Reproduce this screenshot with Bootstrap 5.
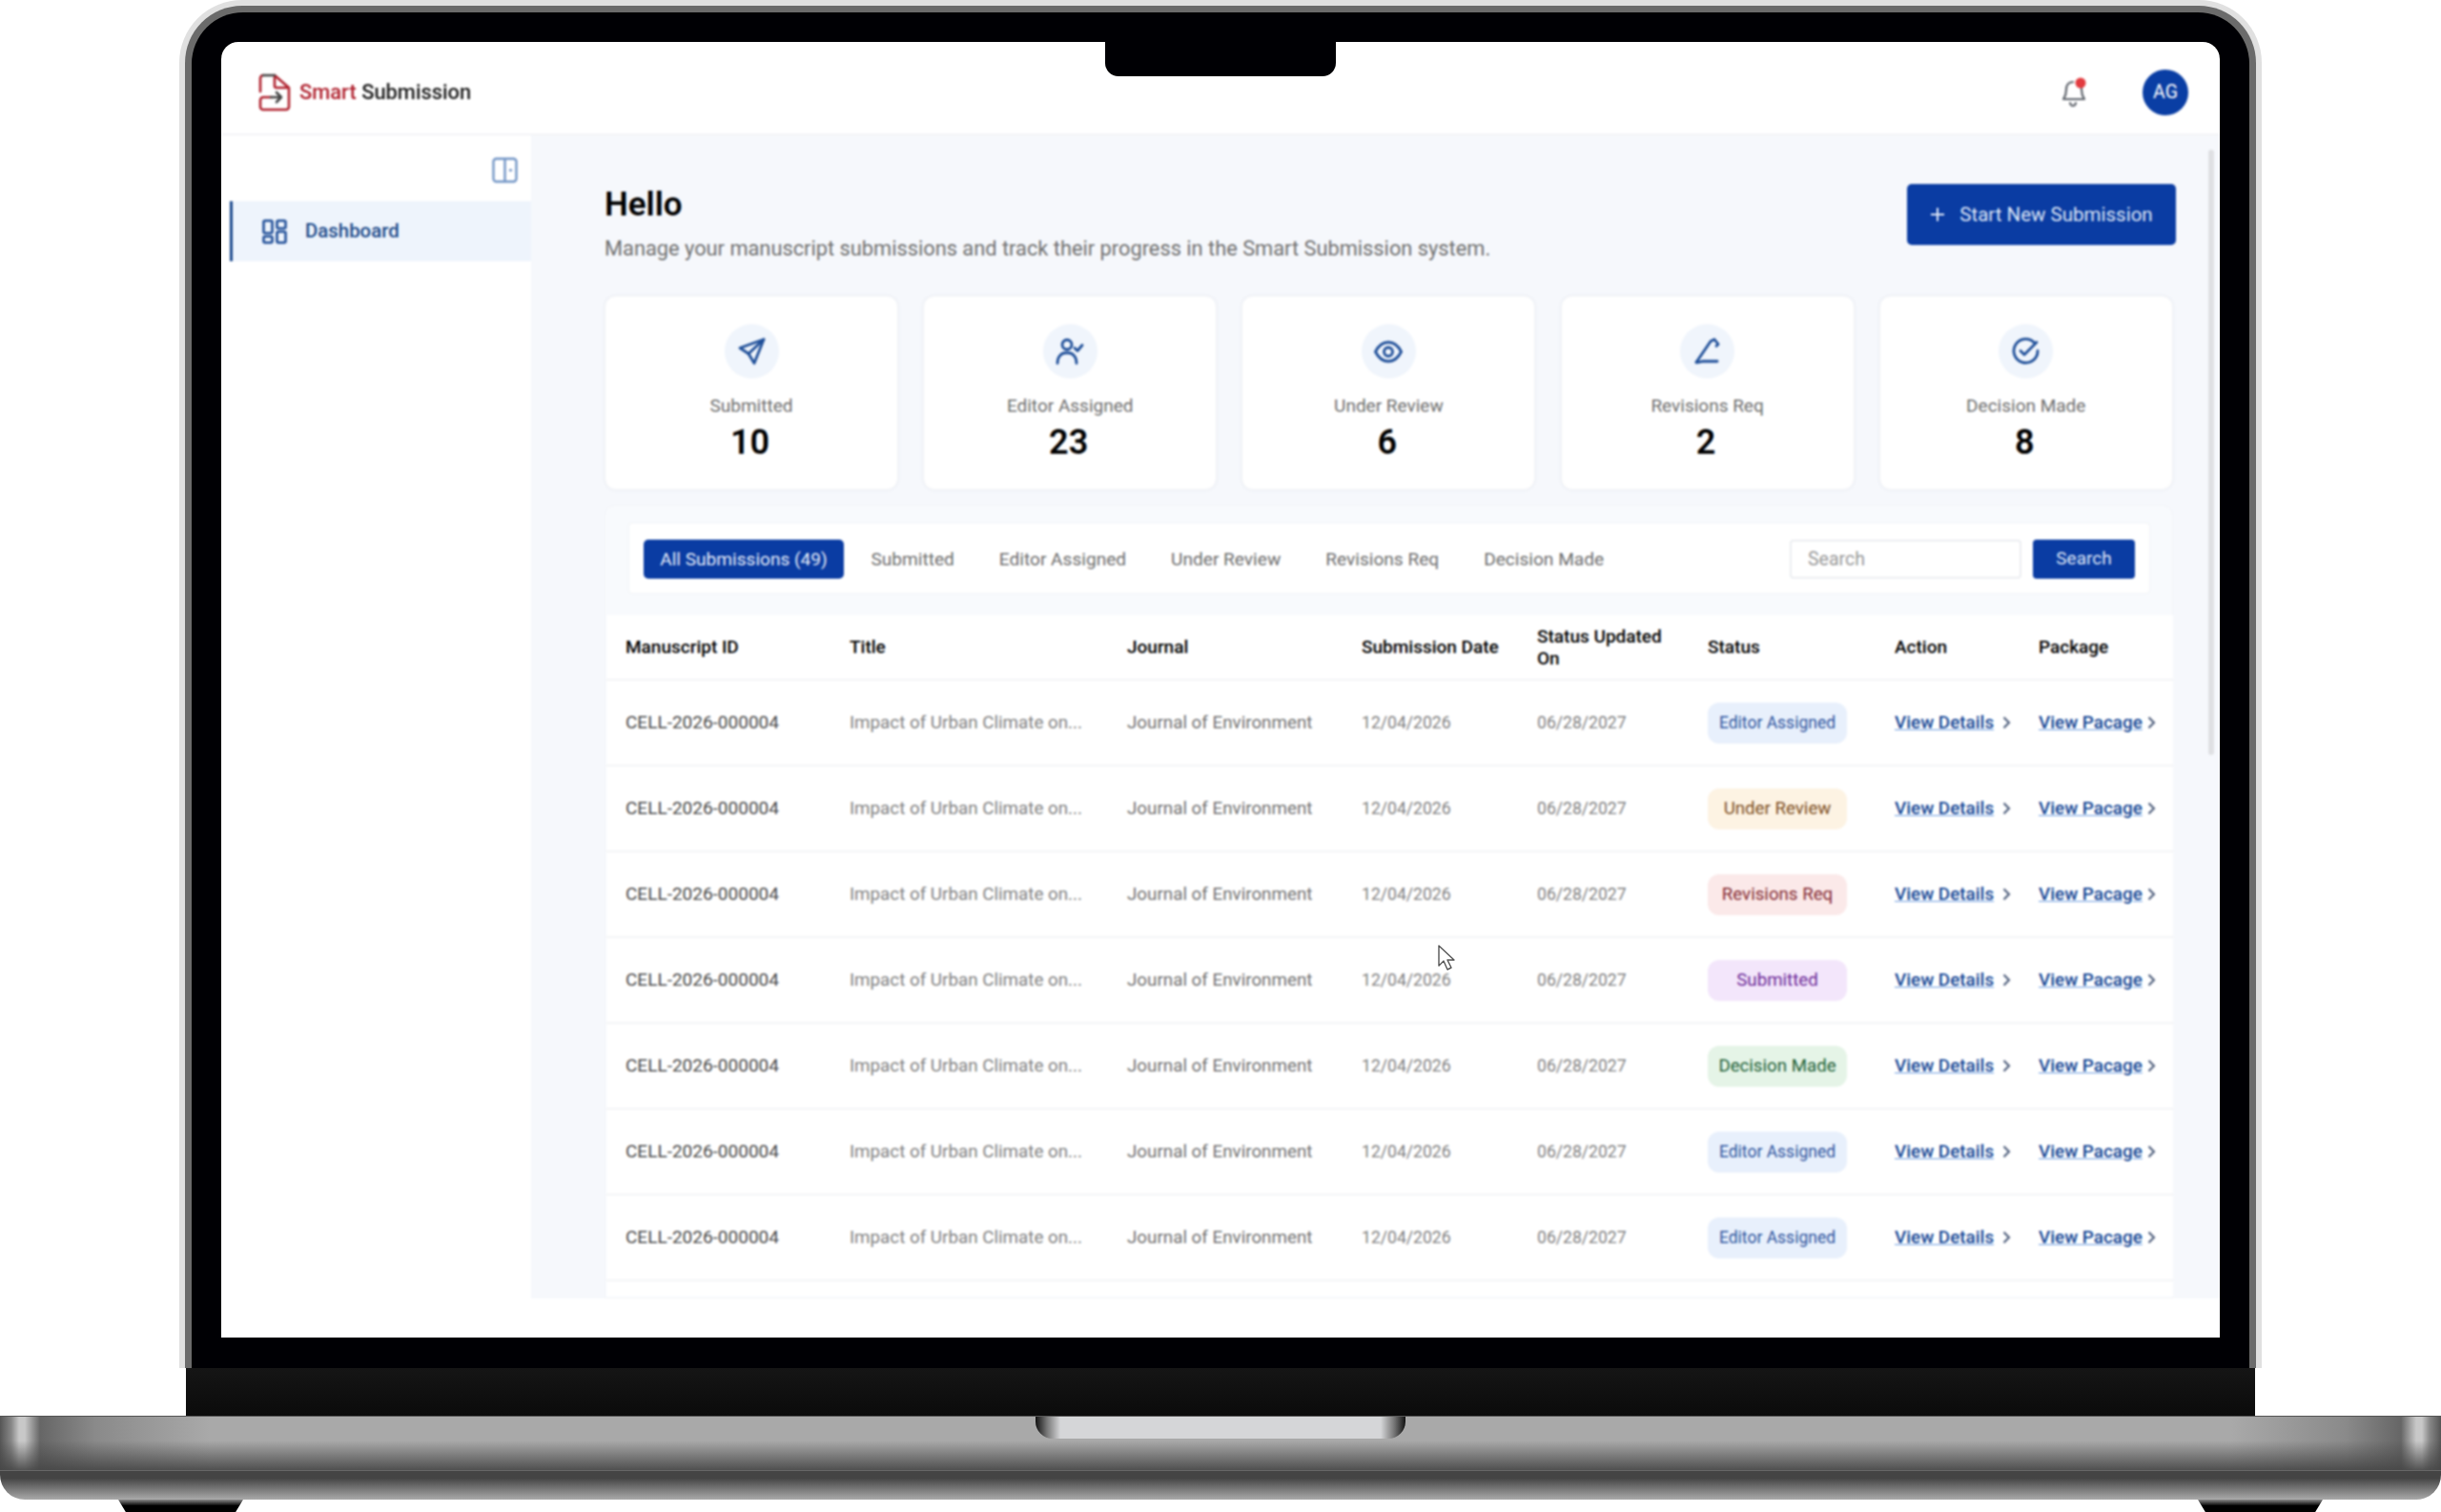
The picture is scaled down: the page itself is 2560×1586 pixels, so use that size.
<!DOCTYPE html>
<html lang="en">
<head>
<meta charset="utf-8">
<title>Smart Submission</title>
<link href="https://cdn.jsdelivr.net/npm/bootstrap@5.3.0/dist/css/bootstrap.min.css" rel="stylesheet">
<style>
html,body{margin:0;height:1586px;background:#fff;overflow:hidden;}
body{font-family:Roboto,"Liberation Sans",sans-serif;font-size:18px;color:#111;}
.lap-outer{width:2184px;height:1435px;margin:0 auto;background:#e0e0e0;padding:6px 6px 0;border-radius:66px 66px 0 0;}
.lap-gray{height:100%;background:#6b6b6b;padding:7px 7px 0;border-radius:60px 60px 0 0;}
.lap-black{height:100%;background:#000004;padding:31px 31px 32px;border-radius:54px 54px 0 0;}
.lap-screen{position:relative;height:100%;background:#fff;border-radius:18px 18px 0 0;overflow:hidden;}
.lap-blur{height:100%;filter:blur(.8px);}
.lap-notch{position:absolute;top:0;left:927px;width:242px;height:36px;background:#000004;border-radius:0 0 14px 14px;z-index:5;}
.lap-hinge{height:50px;width:2170px;margin-left:195px;background:linear-gradient(#151515,#0b0b0b);}
.lap-base{height:57px;background:linear-gradient(to bottom,rgba(70,70,70,0) 45%,rgba(70,70,70,.9) 100%),linear-gradient(to right,#555 0,#888 12px,#c8c8c8 20px,#c8c8c8 26px,#666 42px,#8a8a8a 100px,#a9a9a9 220px,#a9a9a9 2340px,#8a8a8a 2460px,#666 2518px,#c8c8c8 2534px,#c8c8c8 2540px,#888 2548px,#555 2560px);border-top:1px solid #555;}
.lap-lip{width:388px;height:23px;margin:0 auto;border-radius:0 0 18px 18px;background:linear-gradient(to right,#111 0,#777 12px,#d5d6d8 26px,#d5d6d8 362px,#777 376px,#111 388px);}
.lap-front{height:31px;border-top:1px solid #666;border-radius:0 0 26px 26px;background:linear-gradient(#444 0,#444 25%,#aaa 100%);}
.lap-feet{padding:0 124px;}
.lap-foot{width:131px;height:13px;clip-path:polygon(0 0,100% 0,94% 100%,6% 100%);background:linear-gradient(#888,#000 50%);}

.app-top{height:98px;padding:10px 33px 0 39px;border-bottom:2px solid #f3f4f7;}
.logo-text{font-size:21.9px;font-weight:500;margin-left:9px;color:#1a1a1a;}
.logo-text span{color:#b0222f;}
.top-bell{margin-right:55px;}
.top-avatar{width:48px;height:48px;border-radius:50%;background:#0a3ea4;color:#fff;font-size:19.5px;font-weight:400;}
.app-body{height:1220px;}
.side-panel{width:325px;flex:none;padding-top:23px;}
.side-toggle{padding:0 14px 0 0;height:46px;}
.side-item{margin-left:9px;height:63px;background:#eef4fc;border-left:3px solid #1c4a8e;padding-left:31px;color:#1d4a8a;font-weight:500;font-size:20.4px;gap:19px;}
.main-panel{position:relative;background:#f6f8fc;padding:51px 0 0 77px;overflow:hidden;}
.main-inner{width:1645px;}
.top-row{height:64px;}
.scroll-thumb{position:absolute;left:1759px;top:15px;width:6px;height:635px;background:#dfe0e3;border-radius:3px;}
.hello{font-size:35px;font-weight:600;line-height:40px;margin:2px 0 12px;color:#000;}
.hello-sub{font-size:21.8px;line-height:28px;color:#707070;margin:0;}
.btn-start{width:282px;height:64px;margin-right:-3px;background:#0a3ca3;border:0;border-radius:5px;color:#dfe8f8;font-size:20.5px;padding:0;gap:15px;}
.stat-row{margin-top:53px;gap:26.2px;}
.stat-box{width:308px;height:204px;background:#fff;border:1px solid #f1f3f7;border-radius:12px;padding-top:29px;box-shadow:0 0 4px rgba(40,60,100,.05);}
.stat-ico{width:57px;height:57px;border-radius:50%;background:#f0f5fc;}
.stat-label{font-size:19px;line-height:24px;color:#6e6e6e;margin-top:17px;}
.stat-num{font-size:36px;font-weight:600;line-height:42px;color:#000;margin-top:5px;margin-left:-3px;}
.list-panel{margin-top:16px;height:832px;background:#f8fafd;border:1px solid #f3f5f9;border-radius:10px 10px 0 0;padding:17px 0 0 1px;}
.tab-bar{margin:0 23px;height:75px;background:#fff;border:1px solid #f1f3f7;padding:17px 15px 0;border-radius:4px;}
.tab-bar .nav-link{height:41px;padding:0 23.5px;font-size:19.1px;line-height:41px;color:#6e6e6e;border-radius:0;}
.tab-bar .nav-link.active{width:210px;padding:0;text-align:center;background:#0a3ca3;color:#e6edfa;border-radius:5px;margin-right:5px;}
.find-input{width:243px;height:41px;font-size:19.5px;border:2px solid #eceef1;border-radius:4px;padding:0 17px;color:#888;}
.find-input::placeholder{color:#999;}
.find-btn{width:107px;height:41px;margin-left:12px;margin-right:0;padding:0;border:0;border-radius:4px;background:#0a3ca3;color:#dfe8f8;font-size:19px;}
.table-wrap{margin-top:22px;height:715px;background:#fff;margin-right:-1px;}
.sub-table{table-layout:fixed;width:1643px;margin:0;--bs-table-bg:#fff;}
.sub-table th,.sub-table td{padding:0 0 0 20px;vertical-align:middle;border-bottom:2px solid #f3f4f6;}
.sub-table th{height:68px;font-size:19px;font-weight:500;line-height:23px;color:#000;padding-right:20px;}
.sub-table td{height:90px;font-size:18.8px;color:#828282;white-space:nowrap;}
.sub-table td.cell-id{color:#4a4a4a;font-size:19px;}
.sub-table td.cell-jr{color:#727272;}
.sub-table td.cell-dt{font-size:17.6px;}
.st-pill{display:inline-block;width:146px;height:43px;line-height:43px;text-align:center;border-radius:12px;font-size:18.7px;font-weight:400;}
.st-ed{background:#e8f0fc;color:#2f559e;font-size:17.5px;}
.st-ur{background:#fdf3e3;color:#7d4f1f;}
.st-rv{background:#fbe9e9;color:#842a32;}
.st-su{background:#f3e6fb;color:#6c2897;}
.st-dm{background:#e5f4e7;color:#215f36;}
.go-link{color:#164795;font-weight:500;font-size:18.9px;text-decoration-color:#6d9de0;}
.go-wrap{gap:9px;}
.go-wrap.go-tight{gap:5px;}
.cursor-mark{position:absolute;left:1275px;top:946px;z-index:6;}
</style>
</head>
<body>
<div class="lap-outer"><div class="lap-gray"><div class="lap-black"><div class="lap-screen">
  <div class="lap-notch"></div>
  <div class="lap-blur">
    <header class="app-top d-flex align-items-center">
      <svg width="34" height="40" viewBox="0 0 34 40" fill="none" stroke-width="2.6" stroke-linecap="round" stroke-linejoin="round">
        <path stroke="#b0222f" d="M2 19V5a3 3 0 0 1 3-3M17 2l15 13v20a3 3 0 0 1-3 3H5a3 3 0 0 1-3-3v-7a3 3 0 0 1 3-3h9M17 4v9a2 2 0 0 0 2 2h13"/>
        <path stroke="#444" d="M5 2h12M13 25h10M19 20l5 5-5 5"/>
      </svg>
      <div class="logo-text"><span>Smart</span> Submission</div>
      <div class="ms-auto d-flex align-items-center">
        <svg class="top-bell" width="34" height="34" viewBox="0 0 34 34" fill="none" stroke="#5f646c" stroke-width="2.200" stroke-linecap="round" stroke-linejoin="round">
          <path d="M16 6c-5 0-7 4-7 8 0 5-1 7-3 10h22c-2-3-3-5-3-10 0-1 0-2-.4-3"/><path d="M13 28c.5 2 1.500 3 3 3s2.500-1 3-3"/>
          <circle cx="24" cy="7" r="5.500" fill="#e23b3f" stroke="none"/>
        </svg>
        <div class="top-avatar d-flex align-items-center justify-content-center">AG</div>
      </div>
    </header>
    <div class="app-body d-flex">
      <aside class="side-panel">
        <div class="side-toggle d-flex justify-content-end">
          <svg width="27" height="27" viewBox="0 0 27 27" fill="none" stroke="#7396c6" stroke-width="2.400">
            <rect x="1.500" y="1.500" width="24" height="24" rx="3"/><path d="M13.500 1.500v24"/><circle cx="19.500" cy="13.500" r="1.600" fill="#7396c6" stroke="none"/>
          </svg>
        </div>
        <div class="side-item d-flex align-items-center">
          <svg width="26" height="26" viewBox="0 0 26 26" fill="none" stroke="#214f98" stroke-width="2.600">
            <rect x="1.500" y="1.500" width="9" height="13" rx="1.500"/><rect x="15.500" y="1.500" width="9" height="8" rx="1.500"/><rect x="1.500" y="18" width="9" height="6.500" rx="1.500"/><rect x="15.500" y="13" width="9" height="11.500" rx="1.500"/>
          </svg>
          Dashboard
        </div>
      </aside>
      <main class="main-panel flex-grow-1">
        <div class="scroll-thumb"></div>
        <div class="main-inner">
          <div class="top-row d-flex justify-content-between align-items-start">
            <div>
              <h1 class="hello">Hello</h1>
              <p class="hello-sub">Manage your manuscript submissions and track their progress in the Smart Submission system.</p>
            </div>
            <button class="btn btn-start d-flex align-items-center justify-content-center" type="button">
              <svg width="16" height="16" viewBox="0 0 16 16" stroke="#dfe8f8" stroke-width="2"><path d="M8 1v14M1 8h14"/></svg>
              Start New Submission
            </button>
          </div>
          <div class="stat-row d-flex">
            <div class="stat-box d-flex flex-column align-items-center">
              <div class="stat-ico d-flex align-items-center justify-content-center">
                <svg width="29" height="29" viewBox="0 0 29 29" fill="none" stroke="#1f4f99" stroke-width="2.800" stroke-linejoin="round" stroke-linecap="round"><path d="M27 2 2 11l9 6 6 10 10-25Z"/><path d="M27 2 11 17"/></svg>
              </div>
              <div class="stat-label">Submitted</div><div class="stat-num">10</div>
            </div>
            <div class="stat-box d-flex flex-column align-items-center">
              <div class="stat-ico d-flex align-items-center justify-content-center">
                <svg width="30" height="29" viewBox="0 0 30 29" fill="none" stroke="#1f4f99" stroke-width="2.800" stroke-linecap="round" stroke-linejoin="round"><circle cx="12" cy="7.500" r="5"/><path d="M2 27c0-7 4-11 10-11s10 4 10 11"/><path d="m20 11 3 3 5-6"/></svg>
              </div>
              <div class="stat-label">Editor Assigned</div><div class="stat-num">23</div>
            </div>
            <div class="stat-box d-flex flex-column align-items-center">
              <div class="stat-ico d-flex align-items-center justify-content-center">
                <svg width="30" height="24" viewBox="0 0 30 24" fill="none" stroke="#1f4f99" stroke-width="2.800"><path d="M1.500 12C5 5 10 2 15 2s10 3 13.500 10C25 19 20 22 15 22S5 19 1.500 12Z"/><circle cx="15" cy="12" r="4.500"/></svg>
              </div>
              <div class="stat-label">Under Review</div><div class="stat-num">6</div>
            </div>
            <div class="stat-box d-flex flex-column align-items-center">
              <div class="stat-ico d-flex align-items-center justify-content-center">
                <svg width="30" height="30" viewBox="0 0 30 30" fill="none" stroke="#1f4f99" stroke-width="2.800" stroke-linecap="round" stroke-linejoin="round"><path d="M3 26 18 4l4-2 4 5-2 2"/><path d="M3 26h2c2 0 3-1 5-1h15"/></svg>
              </div>
              <div class="stat-label">Revisions Req</div><div class="stat-num">2</div>
            </div>
            <div class="stat-box d-flex flex-column align-items-center">
              <div class="stat-ico d-flex align-items-center justify-content-center">
                <svg width="29" height="29" viewBox="0 0 29 29" fill="none" stroke="#1f4f99" stroke-width="2.800" stroke-linecap="round" stroke-linejoin="round"><path d="M24 6a12.500 12.500 0 1 0 3 8"/><path d="m9 14 4 4 13-13"/></svg>
              </div>
              <div class="stat-label">Decision Made</div><div class="stat-num">8</div>
            </div>
          </div>
          <section class="list-panel">
            <div class="tab-bar d-flex align-items-start">
              <ul class="nav flex-grow-1">
                <li class="nav-item"><a class="nav-link active" href="#">All Submissions (49)</a></li>
                <li class="nav-item"><a class="nav-link" href="#">Submitted</a></li>
                <li class="nav-item"><a class="nav-link" href="#">Editor Assigned</a></li>
                <li class="nav-item"><a class="nav-link" href="#">Under Review</a></li>
                <li class="nav-item"><a class="nav-link" href="#">Revisions Req</a></li>
                <li class="nav-item"><a class="nav-link" href="#">Decision Made</a></li>
              </ul>
              <input class="find-input form-control flex-shrink-0" type="text" placeholder="Search">
              <button class="btn find-btn flex-shrink-0" type="button">Search</button>
            </div>
            <div class="table-wrap">
              <table class="table sub-table">
                <colgroup><col style="width:235px"><col style="width:291px"><col style="width:246px"><col style="width:184px"><col style="width:179px"><col style="width:196px"><col style="width:151px"><col style="width:161px"></colgroup>
                <thead><tr><th>Manuscript ID</th><th>Title</th><th>Journal</th><th>Submission Date</th><th>Status Updated On</th><th>Status</th><th>Action</th><th>Package</th></tr></thead>
                <tbody>
                  <tr><td class="cell-id">CELL-2026-000004</td><td>Impact of Urban Climate on...</td><td class="cell-jr">Journal of Environment</td><td class="cell-dt">12/04/2026</td><td class="cell-dt">06/28/2027</td><td><span class="st-pill st-ed">Editor Assigned</span></td><td><div class="d-flex align-items-center go-wrap"><a class="go-link" href="#">View Details</a><svg width="9" height="14" viewBox="0 0 9 14" fill="none" stroke="#4a5a78" stroke-width="2"><path d="m1.500 1.500 5.500 5.500-5.500 5.500"/></svg></div></td><td><div class="d-flex align-items-center go-wrap go-tight"><a class="go-link" href="#">View Pacage</a><svg width="9" height="14" viewBox="0 0 9 14" fill="none" stroke="#4a5a78" stroke-width="2"><path d="m1.500 1.500 5.500 5.500-5.500 5.500"/></svg></div></td></tr>
                  <tr><td class="cell-id">CELL-2026-000004</td><td>Impact of Urban Climate on...</td><td class="cell-jr">Journal of Environment</td><td class="cell-dt">12/04/2026</td><td class="cell-dt">06/28/2027</td><td><span class="st-pill st-ur">Under Review</span></td><td><div class="d-flex align-items-center go-wrap"><a class="go-link" href="#">View Details</a><svg width="9" height="14" viewBox="0 0 9 14" fill="none" stroke="#4a5a78" stroke-width="2"><path d="m1.500 1.500 5.500 5.500-5.500 5.500"/></svg></div></td><td><div class="d-flex align-items-center go-wrap go-tight"><a class="go-link" href="#">View Pacage</a><svg width="9" height="14" viewBox="0 0 9 14" fill="none" stroke="#4a5a78" stroke-width="2"><path d="m1.500 1.500 5.500 5.500-5.500 5.500"/></svg></div></td></tr>
                  <tr><td class="cell-id">CELL-2026-000004</td><td>Impact of Urban Climate on...</td><td class="cell-jr">Journal of Environment</td><td class="cell-dt">12/04/2026</td><td class="cell-dt">06/28/2027</td><td><span class="st-pill st-rv">Revisions Req</span></td><td><div class="d-flex align-items-center go-wrap"><a class="go-link" href="#">View Details</a><svg width="9" height="14" viewBox="0 0 9 14" fill="none" stroke="#4a5a78" stroke-width="2"><path d="m1.500 1.500 5.500 5.500-5.500 5.500"/></svg></div></td><td><div class="d-flex align-items-center go-wrap go-tight"><a class="go-link" href="#">View Pacage</a><svg width="9" height="14" viewBox="0 0 9 14" fill="none" stroke="#4a5a78" stroke-width="2"><path d="m1.500 1.500 5.500 5.500-5.500 5.500"/></svg></div></td></tr>
                  <tr><td class="cell-id">CELL-2026-000004</td><td>Impact of Urban Climate on...</td><td class="cell-jr">Journal of Environment</td><td class="cell-dt">12/04/2026</td><td class="cell-dt">06/28/2027</td><td><span class="st-pill st-su">Submitted</span></td><td><div class="d-flex align-items-center go-wrap"><a class="go-link" href="#">View Details</a><svg width="9" height="14" viewBox="0 0 9 14" fill="none" stroke="#4a5a78" stroke-width="2"><path d="m1.500 1.500 5.500 5.500-5.500 5.500"/></svg></div></td><td><div class="d-flex align-items-center go-wrap go-tight"><a class="go-link" href="#">View Pacage</a><svg width="9" height="14" viewBox="0 0 9 14" fill="none" stroke="#4a5a78" stroke-width="2"><path d="m1.500 1.500 5.500 5.500-5.500 5.500"/></svg></div></td></tr>
                  <tr><td class="cell-id">CELL-2026-000004</td><td>Impact of Urban Climate on...</td><td class="cell-jr">Journal of Environment</td><td class="cell-dt">12/04/2026</td><td class="cell-dt">06/28/2027</td><td><span class="st-pill st-dm">Decision Made</span></td><td><div class="d-flex align-items-center go-wrap"><a class="go-link" href="#">View Details</a><svg width="9" height="14" viewBox="0 0 9 14" fill="none" stroke="#4a5a78" stroke-width="2"><path d="m1.500 1.500 5.500 5.500-5.500 5.500"/></svg></div></td><td><div class="d-flex align-items-center go-wrap go-tight"><a class="go-link" href="#">View Pacage</a><svg width="9" height="14" viewBox="0 0 9 14" fill="none" stroke="#4a5a78" stroke-width="2"><path d="m1.500 1.500 5.500 5.500-5.500 5.500"/></svg></div></td></tr>
                  <tr><td class="cell-id">CELL-2026-000004</td><td>Impact of Urban Climate on...</td><td class="cell-jr">Journal of Environment</td><td class="cell-dt">12/04/2026</td><td class="cell-dt">06/28/2027</td><td><span class="st-pill st-ed">Editor Assigned</span></td><td><div class="d-flex align-items-center go-wrap"><a class="go-link" href="#">View Details</a><svg width="9" height="14" viewBox="0 0 9 14" fill="none" stroke="#4a5a78" stroke-width="2"><path d="m1.500 1.500 5.500 5.500-5.500 5.500"/></svg></div></td><td><div class="d-flex align-items-center go-wrap go-tight"><a class="go-link" href="#">View Pacage</a><svg width="9" height="14" viewBox="0 0 9 14" fill="none" stroke="#4a5a78" stroke-width="2"><path d="m1.500 1.500 5.500 5.500-5.500 5.500"/></svg></div></td></tr>
                  <tr><td class="cell-id">CELL-2026-000004</td><td>Impact of Urban Climate on...</td><td class="cell-jr">Journal of Environment</td><td class="cell-dt">12/04/2026</td><td class="cell-dt">06/28/2027</td><td><span class="st-pill st-ed">Editor Assigned</span></td><td><div class="d-flex align-items-center go-wrap"><a class="go-link" href="#">View Details</a><svg width="9" height="14" viewBox="0 0 9 14" fill="none" stroke="#4a5a78" stroke-width="2"><path d="m1.500 1.500 5.500 5.500-5.500 5.500"/></svg></div></td><td><div class="d-flex align-items-center go-wrap go-tight"><a class="go-link" href="#">View Pacage</a><svg width="9" height="14" viewBox="0 0 9 14" fill="none" stroke="#4a5a78" stroke-width="2"><path d="m1.500 1.500 5.500 5.500-5.500 5.500"/></svg></div></td></tr>
                </tbody>
              </table>
            </div>
          </section>
        </div>
      </main>
    </div>
  </div>
  <svg class="cursor-mark" width="20" height="30" viewBox="0 0 20 30" fill="#fff" stroke="#555" stroke-width="1.400" stroke-linejoin="round"><path d="M2 2v21l5-5 4 9 4-2-4-8h7L2 2Z"/></svg>
</div></div></div></div>
<div class="lap-hinge"></div>
<div class="lap-base"><div class="lap-lip"></div></div>
<div class="lap-front"></div>
<div class="lap-feet d-flex justify-content-between"><div class="lap-foot"></div><div class="lap-foot"></div></div>
<script src="https://cdn.jsdelivr.net/npm/bootstrap@5.3.0/dist/js/bootstrap.bundle.min.js"></script>
</body>
</html>
